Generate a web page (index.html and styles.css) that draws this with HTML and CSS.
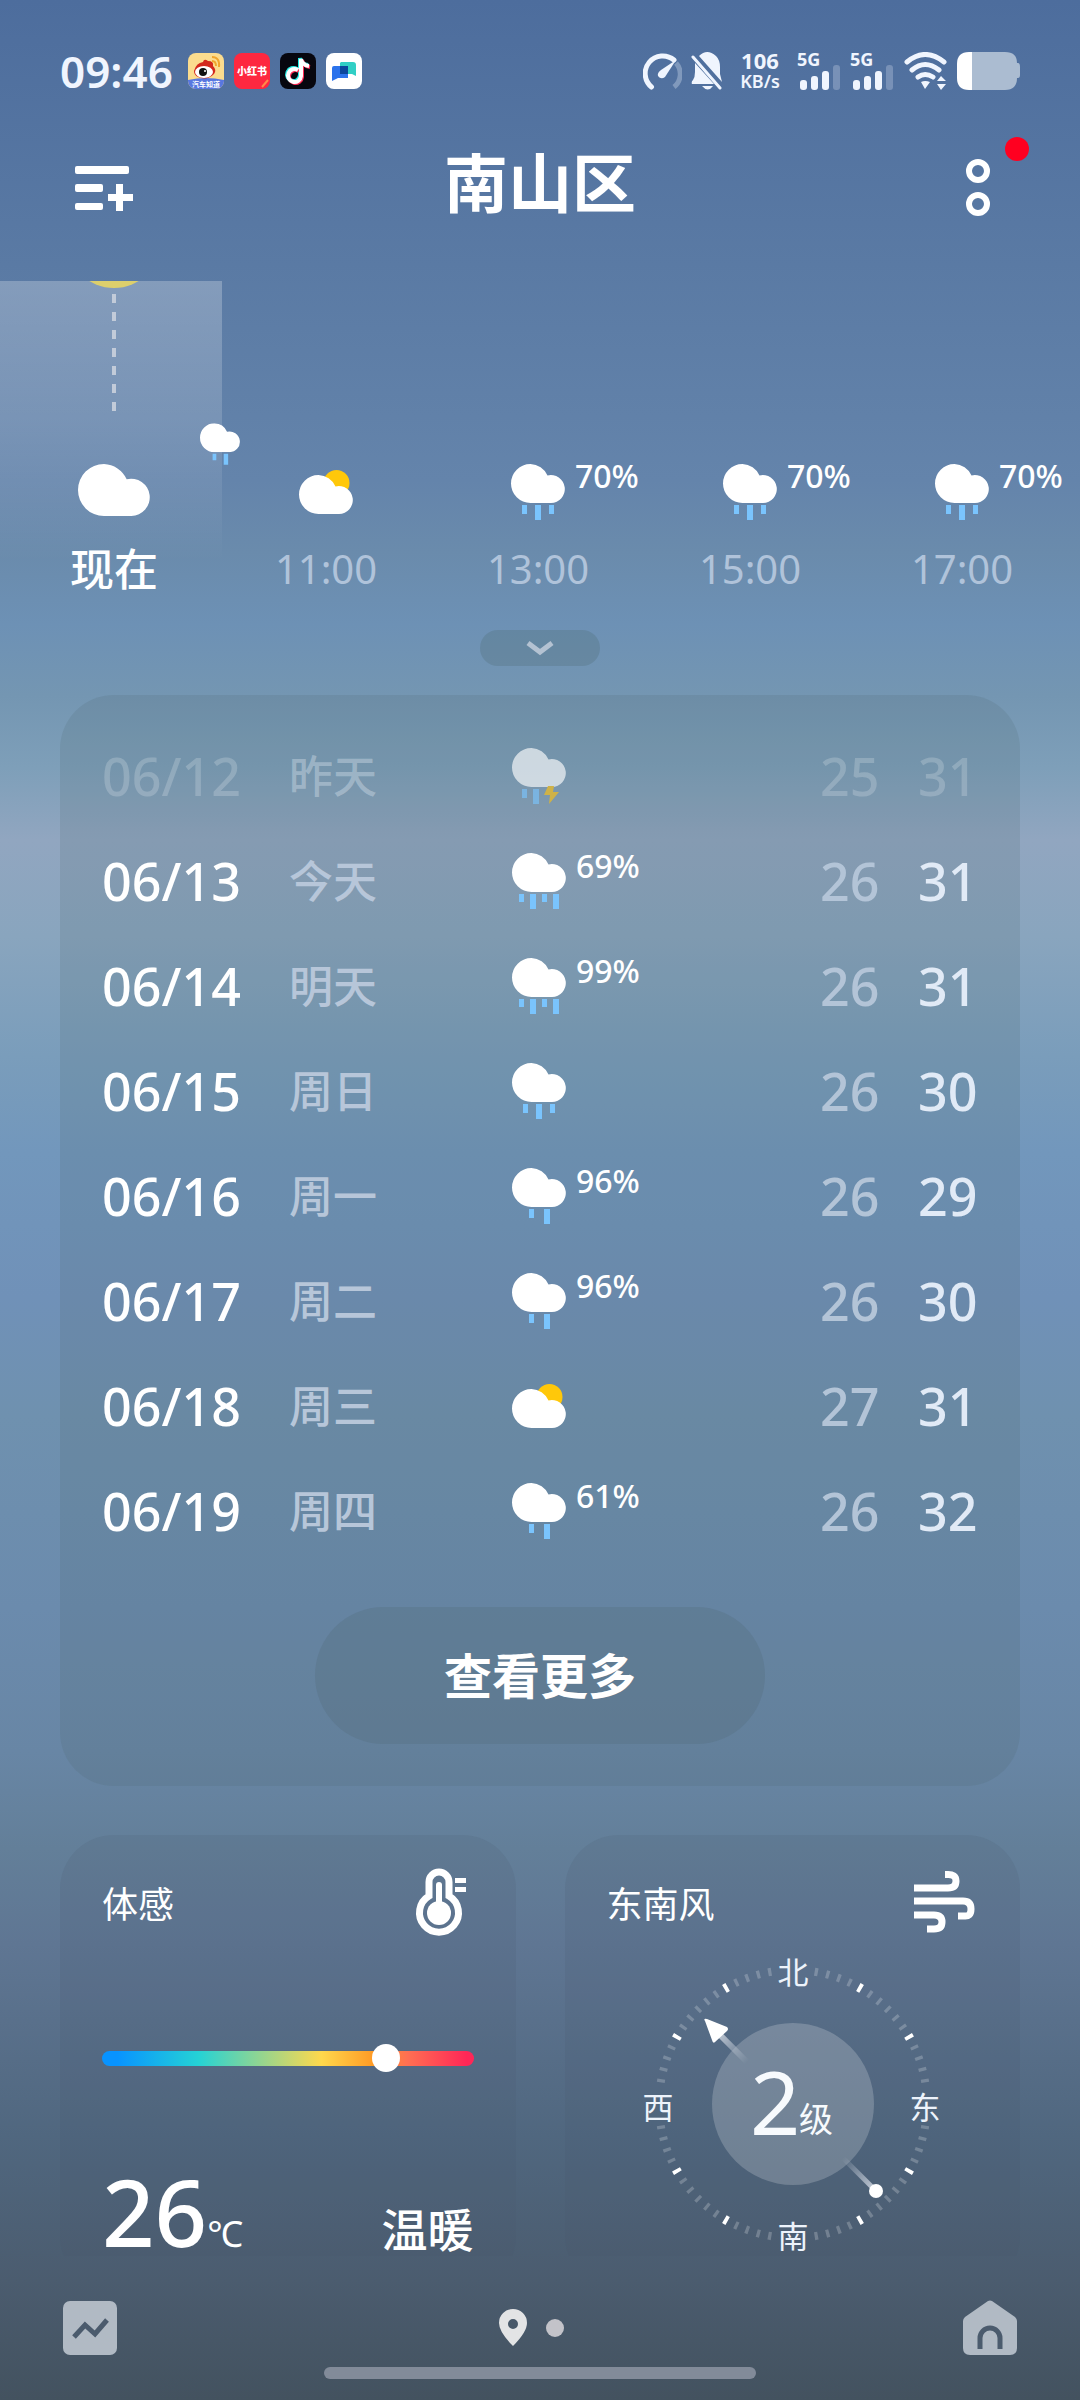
FILE: index.html
```html
<!DOCTYPE html>
<html lang="zh-CN">
<head>
<meta charset="utf-8">
<meta name="viewport" content="width=device-width, initial-scale=1">
<title>南山区 天气</title>
<link rel="stylesheet" href="styles.css">
</head>
<body>
<svg class="sprite" width="0" height="0" aria-hidden="true">
  <symbol id="cloud" viewBox="0 0 54 39"><path fill="#fff" d="M19.500 39A19.500 19.500 0 0 1 19.500 0A19.500 19.500 0 0 1 36.500 11.400A14 14 0 1 1 40 39Z"/></symbol>
  <symbol id="rain2" viewBox="0 0 54 56"><use href="#cloud" width="54" height="39"/><path fill="#7ac4fd" d="M17 41h5v9h-5zM32 41h6v15h-6z"/></symbol>
  <symbol id="rain3" viewBox="0 0 54 56"><use href="#cloud" width="54" height="39"/><path fill="#7ac4fd" d="M11 41h5v9h-5zM24 41h6v15h-6zM38 41h5v9h-5z"/></symbol>
  <symbol id="rain4" viewBox="0 0 54 56"><use href="#cloud" width="54" height="39"/><path fill="#7ac4fd" d="M7 41h5v8h-5zM18 41h6v15h-6zM30 41h5v8h-5zM41 41h6v15h-6z"/></symbol>
  <symbol id="storm" viewBox="0 0 54 56"><use href="#cloud" width="54" height="39"/><path fill="#7ac4fd" d="M10 41h5v9h-5zM21 41h6v15h-6z"/><path fill="#ffc20e" d="M36 38h6l-1 6h6l-10 12 1-9h-6z"/></symbol>
  <symbol id="partly" viewBox="0 0 54 56"><circle cx="37.500" cy="19" r="13" fill="#ffc80a"/><use href="#cloud" y="11" width="54" height="39"/></symbol>
  <symbol id="signal" viewBox="0 0 44 38"><g fill="#f0f5fe"><rect x="3" y="28" width="7" height="10" rx="3"/><rect x="14" y="24" width="7" height="14" rx="3"/><rect x="25" y="19" width="7" height="19" rx="3"/><rect x="36" y="13" width="7" height="25" rx="3" opacity=".25"/></g></symbol>
</svg>

<div class="app">
  <div class="status">
    <div class="status-left">
      <time class="clock">09:46</time>
      <svg class="app-icon" viewBox="0 0 36 36" aria-label="微博">
        <defs><clipPath id="tile"><rect width="36" height="36" rx="8"/></clipPath></defs>
        <g clip-path="url(#tile)"><rect width="36" height="36" fill="#fbdc8e"/><path d="M0 27Q18 23 36 27V36H0Z" fill="#5877e0"/>
        <path d="M6 18Q8 10 15 9Q16 5 20 8Q26 8 25 13Q29 17 26 21Q19 28 10 24Q6 22 6 18Z" fill="#d3281c"/><ellipse cx="16" cy="19" rx="9" ry="6" fill="#fff"/><circle cx="15" cy="19" r="4" fill="#111"/><circle cx="17" cy="18" r="1" fill="#fff"/>
        <path d="M24 8q4 0 4 5M24 4q8 0 7 10" fill="none" stroke="#f0a52c" stroke-width="2"/><text x="18" y="34" class="tile-note">汽车知道</text></g>
      </svg>
      <svg class="app-icon" viewBox="0 0 36 36" aria-label="小红书"><rect width="36" height="36" rx="8" fill="#fe2840"/><text x="18" y="22" class="tile-name">小红书</text><path d="M28 34l6-7" stroke="#ff8a4a" stroke-width="2"/></svg>
      <svg class="app-icon" viewBox="0 0 36 36" aria-label="抖音"><rect width="36" height="36" rx="8" fill="#07070f"/><g fill="none" stroke-width="4"><path d="M18 17a6.500 6.500 0 1 0 3 6V6q1 6 8 7" stroke="#25e8e2" transform="translate(-1 -1)"/><path d="M18 17a6.500 6.500 0 1 0 3 6V6q1 6 8 7" stroke="#fe2b55" transform="translate(1 1)"/><path d="M18 17a6.500 6.500 0 1 0 3 6V6q1 6 8 7" stroke="#fff"/></g></svg>
      <svg class="app-icon" viewBox="0 0 36 36" aria-label="消息"><rect width="36" height="36" rx="8" fill="#fff"/><path d="M15 9h12q3 0 3 3v11l-4-2H14V10z" fill="#31cfc5"/><path d="M6 28V15q0-2 2-2h14v12H12z" fill="#2b73ec"/><path d="M14 13h8v8h-8z" fill="#0b479c"/></svg>
    </div>
    <div class="status-right">
      <svg width="39" height="38" viewBox="0 0 39 38" fill="none" stroke="#f0f5fe" stroke-width="5" stroke-linecap="round"><path d="M8.500 35A16.500 16.500 0 0 1 31 8"/><path d="M33 11A16.500 16.500 0 0 1 31 35" opacity=".3" stroke-linecap="butt"/><path d="M33 8L22 25Q18 28 15 24Q14 21 18 18Z" fill="#f0f5fe" stroke="none"/></svg>
      <svg width="32" height="38" viewBox="0 0 32 38" fill="#f0f5fe"><path d="M8 4Q16-4 25 4Q29 8 29 15V22L31 30ZM4 11L23 32H1Q0 30 2 28Q4 25 4 20ZM11 34H22Q17 41 11 34Z"/><path d="M2 5L29 36" stroke="#f0f5fe" stroke-width="3" stroke-linecap="round"/></svg>
      <div class="speed"><b>106</b><span>KB/s</span></div>
      <div class="cell"><svg width="44" height="38"><use href="#signal"/></svg><span>5G</span></div>
      <div class="cell"><svg width="44" height="38"><use href="#signal"/></svg><span>5G</span></div>
      <svg width="45" height="38" viewBox="0 0 45 38" fill="none" stroke="#f0f5fe" stroke-width="5" stroke-linecap="round"><path d="M4 10Q22-5 41 10M9 18Q22 7 36 18M15 25Q22 20 30 25"/><path d="M18 30Q22 28 27 30L22 37ZM34 29l4-5 5 5zM34 32h9l-5 6z" fill="#f0f5fe" stroke="none"/></svg>
      <svg width="63" height="38" viewBox="0 0 63 38"><path d="M15 0H48Q60 0 60 11H61Q63 11 63 15V23Q63 26 61 26H60Q60 38 48 38H15Z" fill="#abbcd1"/><path d="M15 0V38H12Q0 38 0 26V12Q0 0 12 0Z" fill="#fff"/></svg>
    </div>
  </div>

  <header class="header">
    <button class="icon-button" type="button" aria-label="城市列表"><svg width="88" height="64" viewBox="0 5 88 64" fill="#fff"><rect x="15" y="20" width="54" height="8" rx="2"/><rect x="15" y="38" width="28" height="8" rx="2"/><rect x="15" y="57" width="28" height="7" rx="2"/><path d="M56 38h7v10h10v7H63v10h-7V55H48v-7h8z"/></svg></button>
    <h1>南山区</h1>
    <button class="icon-button" type="button" aria-label="更多"><svg width="88" height="64" viewBox="0 5 88 64" fill="none" stroke="#fff" stroke-width="6"><circle cx="46" cy="25" r="9"/><circle cx="46" cy="58" r="9"/></svg><i class="badge"></i></button>
  </header>

  <main class="content">
    <section class="hourly" aria-label="逐小时预报">
      <div class="now-band"></div>
      <svg class="sun-line" width="100" height="140" viewBox="0 0 100 140"><circle cx="50" cy="-40" r="47" fill="#ddcf6c"/><path d="M50 13V131" stroke="#c2cbd9" stroke-width="4" stroke-dasharray="9 9"/></svg>
      <svg class="soon" width="40" height="42"><use href="#rain2"/></svg>
      <div class="hour now"><div class="sky"><svg width="72" height="52"><use href="#cloud"/></svg></div><span>现在</span></div>
      <div class="hour"><div class="sky"><svg width="54" height="56"><use href="#partly"/></svg></div><time>11:00</time></div>
      <div class="hour"><div class="sky"><svg width="54" height="56"><use href="#rain3"/></svg><span class="chance">70%</span></div><time>13:00</time></div>
      <div class="hour"><div class="sky"><svg width="54" height="56"><use href="#rain3"/></svg><span class="chance">70%</span></div><time>15:00</time></div>
      <div class="hour"><div class="sky"><svg width="54" height="56"><use href="#rain3"/></svg><span class="chance">70%</span></div><time>17:00</time></div>
    </section>
    <button class="expand" type="button" aria-label="展开"><svg width="28" height="16" viewBox="0 0 28 16" fill="none" stroke="#b4c2d2" stroke-width="5"><path d="M2 3L14 12L26 3"/></svg></button>

    <section class="card daily" aria-label="多日预报">
      <table>
        <colgroup><col class="c-date"><col class="c-day"><col class="c-sky"><col class="c-low"><col></colgroup>
        <tbody>
          <tr class="past"><td>06/12</td><td class="day">昨天</td><td><div class="sky-row"><svg width="54" height="56"><use href="#storm"/></svg></div></td><td class="low">25</td><td class="high">31</td></tr>
          <tr><td>06/13</td><td class="day">今天</td><td><div class="sky-row"><svg width="54" height="56"><use href="#rain4"/></svg><span>69%</span></div></td><td class="low">26</td><td class="high">31</td></tr>
          <tr><td>06/14</td><td class="day">明天</td><td><div class="sky-row"><svg width="54" height="56"><use href="#rain4"/></svg><span>99%</span></div></td><td class="low">26</td><td class="high">31</td></tr>
          <tr><td>06/15</td><td class="day">周日</td><td><div class="sky-row"><svg width="54" height="56"><use href="#rain3"/></svg></div></td><td class="low">26</td><td class="high">30</td></tr>
          <tr><td>06/16</td><td class="day">周一</td><td><div class="sky-row"><svg width="54" height="56"><use href="#rain2"/></svg><span>96%</span></div></td><td class="low">26</td><td class="high">29</td></tr>
          <tr><td>06/17</td><td class="day">周二</td><td><div class="sky-row"><svg width="54" height="56"><use href="#rain2"/></svg><span>96%</span></div></td><td class="low">26</td><td class="high">30</td></tr>
          <tr><td>06/18</td><td class="day">周三</td><td><div class="sky-row"><svg width="54" height="56"><use href="#partly"/></svg></div></td><td class="low">27</td><td class="high">31</td></tr>
          <tr><td>06/19</td><td class="day">周四</td><td><div class="sky-row"><svg width="54" height="56"><use href="#rain2"/></svg><span>61%</span></div></td><td class="low">26</td><td class="high">32</td></tr>
        </tbody>
      </table>
      <button class="more" type="button">查看更多</button>
    </section>

    <div class="metrics">
      <section class="card metric">
        <div class="metric-head"><label for="feel">体感</label>
          <svg width="60" height="72" viewBox="2 0 60 72"><path d="M17 30V16A10 10 0 0 1 37 16V30A19.500 19.500 0 1 1 17 30Z" fill="none" stroke="#fff" stroke-width="7"/><circle cx="27" cy="47" r="12" fill="#fff"/><path d="M27 19V46" stroke="#fff" stroke-width="6" stroke-linecap="round"/><path d="M43 12h11v5H43zM43 21h11v5H43z" fill="#fff"/></svg>
        </div>
        <input class="gauge" id="feel" type="range" min="0" max="1000" value="786">
        <div class="feel"><p class="degrees">26<small>℃</small></p><p class="comfort">温暖</p></div>
      </section>
      <section class="card metric">
        <div class="metric-head"><h2>东南风</h2>
          <svg width="64" height="64" viewBox="0 0 64 64" fill="none" stroke="#fff" stroke-width="7"><path d="M0 18H34Q42 18 42 11T33 4.500H31M0 31H49Q57 31 57 39T50 46H44M0 45H20Q28 45 28 52T20 59H13"/></svg>
        </div>
        <svg class="compass" width="300" height="300" viewBox="-151 -150 300 300">
          <defs>
            <linearGradient id="head" gradientUnits="userSpaceOnUse" x1="-76" y1="-72" x2="-46" y2="-42"><stop stop-color="#c3cbd6"/><stop offset="1" stop-color="#c3cbd6" stop-opacity="0"/></linearGradient>
            <linearGradient id="tail" gradientUnits="userSpaceOnUse" x1="82" y1="86" x2="50" y2="54"><stop stop-color="#c3cbd6"/><stop offset="1" stop-color="#c3cbd6" stop-opacity="0"/></linearGradient>
          </defs>
          <circle r="81" fill="#fff" opacity=".2"/>
          <g fill="none" stroke="#fff" stroke-width="9">
            <circle r="134" pathLength="360" stroke-width="8" opacity=".22" stroke-dashoffset="-9.300" stroke-dasharray="1.400 3.600 1.400 3.600 1.400 3.600 1.400 3.600 1.400 3.600 1.400 3.600 1.400 3.600 1.400 3.600 1.400 3.600 1.400 3.600 1.400 3.600 1.400 3.600 1.400 3.600 1.400 3.600 1.400 18.600"/>
            <circle r="134" pathLength="360" stroke-dashoffset="-29.200" stroke-dasharray="1.600 28.400 1.600 58.400"/>
          </g>
          <path d="M-76-72L-46-42" stroke="url(#head)" stroke-width="6"/><path d="M-88-83Q-90-86-86-85L-66-77Q-64-75-66-73L-78-62Q-80-60-81-64Z" fill="#fff"/>
          <path d="M82 86L50 54" stroke="url(#tail)" stroke-width="5"/><circle cx="83" cy="87" r="7" fill="#fff"/>
          <g class="compass-label"><text x="0" y="-120">北</text><text x="0" y="144">南</text><text x="-135" y="15">西</text><text x="132" y="15">东</text></g>
          <text class="force" x="-43" y="31">2</text><text class="force-unit" x="6" y="28">级</text>
        </svg>
      </section>
    </div>
  </main>

  <nav class="bottom">
    <a href="#trend" aria-label="趋势"><svg width="56" height="56" viewBox="0 0 56 56"><rect x="1" y="1" width="54" height="54" rx="7" fill="#b1bac4"/><path d="M12 37L23 25L33 34L45 20" fill="none" stroke="#4b5b6d" stroke-width="5"/></svg></a>
    <div class="pages"><svg width="30" height="38" viewBox="0 0 30 38"><path fill-rule="evenodd" fill="#e3e4e5" d="M15 37Q1 23 1 14A14 14 0 0 1 29 14Q29 23 15 37ZM15 10A5 5 0 1 0 15 20A5 5 0 1 0 15 10Z"/></svg><i></i></div>
    <a href="#home" aria-label="主页"><svg width="56" height="56" viewBox="0 0 56 56"><path d="M3 17L26 1Q28 0 30 1L53 17Q55 19 55 21V48Q55 55 48 55H8Q1 55 1 48V21Q1 19 3 17Z" fill="#b1bac4"/><path d="M18 49V38A10 10 0 0 1 38 38V49" fill="none" stroke="#4b5b6d" stroke-width="5"/></svg></a>
  </nav>
  <div class="home-bar"></div>
</div>
</body>
</html>
```
FILE: styles.css
```css
* { box-sizing: border-box; }

body {
  margin: 0;
  color: #fff;
  font-family: "Noto Sans", "Noto Sans CJK SC", sans-serif;
}

button {
  padding: 0;
  border: 0;
  background: none;
  color: inherit;
  font: inherit;
}

h1, h2, p { margin: 0; font-weight: 400; }
svg { display: block; flex: none; }
.sprite { position: absolute; }

.app {
  display: flex;
  flex-direction: column;
  height: 100vh;
  background: linear-gradient(#4d6d9d 0%, #5a7aa4 11%, #6484ab 20%, #6a8bac 23%, #6d91b5 26%, #7496b2 29%, #7e9fb9 32%, #91a6c0 35%, #89a5be 39%, #7a9dbb 44%, #7297bc 48%, #7091b8 54%, #6f91af 59%, #6b8bad 67%, #6886a5 73%, #637f99 77%, #5f7693 81%, #50677f 89%, #4b5c6f 95%, #43525f 100%);
}

/* status bar */
.status {
  display: flex;
  justify-content: space-between;
  align-items: center;
  padding: 46px 60px 0;
  height: 95px;
  flex: none;
}
.status-left { display: flex; align-items: center; gap: 10px; }
.status-right { display: flex; align-items: center; gap: 9px; color: #f0f5fe; }
.clock { width: 118px; color: #f0f5fe; font-size: 44px; line-height: 44px; font-weight: 600; }
.app-icon { width: 36px; height: 36px; }
.tile-note { fill: #fff; font-size: 7px; font-weight: 700; text-anchor: middle; }
.tile-name { fill: #fff; font-size: 10px; font-weight: 900; text-anchor: middle; }
.speed { display: flex; flex-direction: column; width: 56px; text-align: center; font-weight: 600; line-height: 21px; }
.speed b { font-size: 22px; font-weight: 700; }
.speed span { font-size: 18px; }
.cell { position: relative; }
.cell span { position: absolute; top: -3px; left: 0; font-size: 18px; line-height: 20px; font-weight: 700; }

/* title bar */
.header {
  display: flex;
  justify-content: space-between;
  align-items: center;
  flex: none;
  padding: 56px 60px 66px;
}
.header h1 { font-size: 64px; line-height: 64px; font-weight: 700; }
.icon-button { position: relative; }
.icon-button svg { overflow: visible; }
.badge {
  position: absolute;
  top: -14px;
  right: -9px;
  width: 24px;
  height: 24px;
  border-radius: 50%;
  background: #ff0020;
}

.content { flex: 1; min-height: 0; overflow-y: auto; scrollbar-width: none; }

/* hourly forecast */
.hourly {
  position: relative;
  display: grid;
  grid-template-columns: repeat(5, 1fr);
  padding: 183px 12px 16px 8px;
  overflow: hidden;
}
.now-band {
  position: absolute;
  top: 0;
  left: 0;
  width: 222px;
  height: 280px;
  background: linear-gradient(rgba(255, 255, 255, .25), rgba(255, 255, 255, .15) 50%, rgba(255, 255, 255, 0));
}
.sun-line { position: absolute; top: 0; left: 64px; }
.soon { position: absolute; top: 142px; left: 200px; }
.hour { position: relative; display: flex; flex-direction: column; align-items: center; gap: 23px; }
.hour time { color: #b0c3da; font-size: 40px; line-height: 52px; }
.hour.now > span { font-size: 44px; line-height: 52px; font-weight: 500; }
.sky { position: relative; height: 56px; }
.chance { position: absolute; top: -4px; left: 64px; font-size: 32px; line-height: 32px; font-weight: 500; }
.expand {
  display: flex;
  justify-content: center;
  align-items: center;
  width: 120px;
  height: 36px;
  margin: 19px auto 29px;
  border-radius: 18px;
  background: rgba(80, 110, 120, .3);
}

/* cards */
.card { border-radius: 54px; background: rgba(70, 85, 105, .14); }
.daily { margin: 0 60px; padding: 28px 42px 42px; background: rgba(75, 98, 108, .16); }
.daily table { width: 100%; table-layout: fixed; border-collapse: collapse; }
.c-date { width: 187px; }
.c-day { width: 223px; }
.c-sky { width: 308px; }
.c-low { width: 98px; }
.daily td { height: 105px; padding: 0; font-size: 52px; line-height: 60px; font-weight: 500; white-space: nowrap; }
.daily .day { color: #b7c6d9; font-size: 44px; }
.daily .low { color: #b3c4d7; }
.daily .high { color: #e1eaf6; }
.sky-row { display: flex; gap: 10px; }
.sky-row span { font-size: 32px; line-height: 26px; }
.daily .past td { color: rgba(255, 255, 255, .2); }
.daily .past .day { color: rgba(220, 230, 240, .4); }
.past svg { opacity: .64; }
.more {
  display: block;
  width: 450px;
  height: 137px;
  margin: 44px auto 0;
  padding-bottom: 6px;
  border-radius: 69px;
  background: rgba(80, 105, 115, .25);
  font-size: 48px;
  font-weight: 700;
}

.metrics { display: grid; grid-template-columns: 1fr 1fr; gap: 49px; margin: 49px 60px 0; }
.metric { height: 455px; padding: 30px 42px; }
.metric-head { display: flex; justify-content: space-between; align-items: center; height: 74px; font-size: 36px; }
.metric-head h2 { font-size: 36px; }

.gauge {
  display: block;
  width: 100%;
  height: 28px;
  margin: 105px 0 94px;
  appearance: none;
  background: none;
}
.gauge::-webkit-slider-runnable-track {
  height: 15px;
  border-radius: 8px;
  background: linear-gradient(90deg, #0893ff 4%, #25d2d5 26%, #ffd84c 59%, #ff9a25 73%, #ff7052 82%, #ff2757 98%);
}
.gauge::-webkit-slider-thumb {
  appearance: none;
  width: 28px;
  height: 28px;
  margin-top: -7px;
  border-radius: 50%;
  background: #fff;
}
.feel { display: flex; justify-content: space-between; align-items: baseline; }
.degrees { font-size: 92px; line-height: 92px; font-weight: 500; }
.degrees small { font-size: 36px; line-height: 36px; font-weight: 400; }
.comfort { font-size: 46px; line-height: 46px; font-weight: 500; }

.compass { margin: 15px auto 0; }
.compass-label { fill: #edf3fb; font-size: 31px; text-anchor: middle; }
.force { fill: #f7fafd; font-size: 88px; }
.force-unit { fill: #f7fafd; font-size: 34px; }

/* bottom navigation */
.bottom { display: flex; justify-content: space-between; align-items: center; flex: none; margin-top: 44px; padding: 0 62px; }
.pages { display: flex; align-items: center; gap: 18px; padding-right: 18px; }
.pages i { width: 18px; height: 18px; border-radius: 50%; background: #c3c3c9; }
.home-bar { flex: none; width: 40%; height: 12px; margin: 11px auto 21px; border-radius: 6px; background: #828b99; }
```
